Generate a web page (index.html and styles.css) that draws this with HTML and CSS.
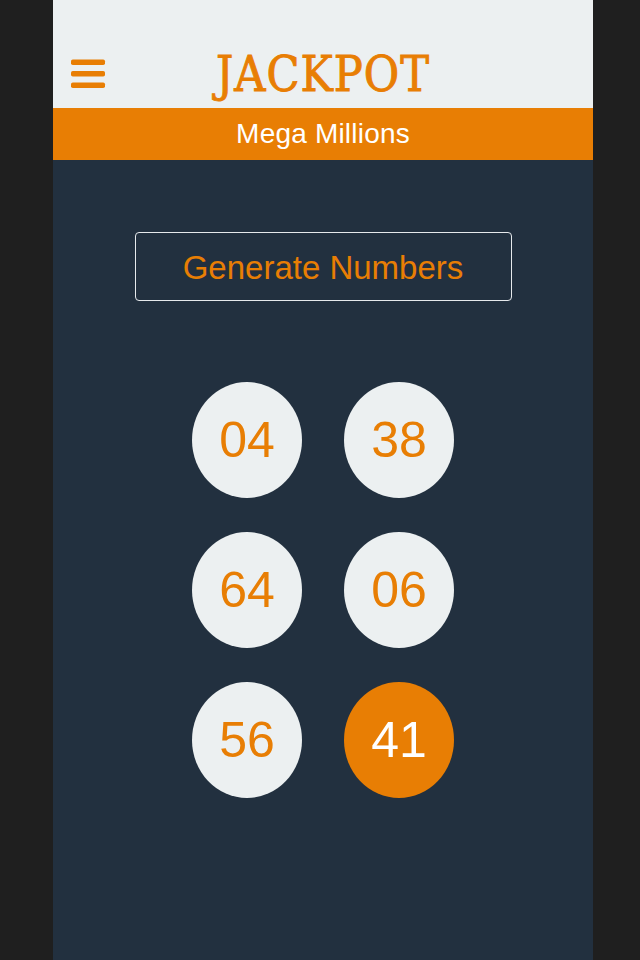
FILE: index.html
```html
<!DOCTYPE html>
<html>
<head>
<meta charset="utf-8">
<link rel="stylesheet" href="styles.css">
</head>
<body>
<div class="app">
  <header class="header">
    <button class="menu" aria-label="Menu">
      <svg width="35" height="30" viewBox="0 0 35 30">
        <rect x="0" y="0.5" width="34" height="5.5" rx="1.8" fill="#e87e04"/>
        <rect x="0" y="12" width="34" height="5.5" rx="1.8" fill="#e87e04"/>
        <rect x="0" y="23.5" width="34" height="5.5" rx="1.8" fill="#e87e04"/>
      </svg>
    </button>
    <h1 class="title">JACKPOT</h1>
  </header>
  <div class="subbar">Mega Millions</div>
  <main class="content">
    <button class="generate">Generate Numbers</button>
    <div class="balls">
      <div class="ball">04</div>
      <div class="ball">38</div>
      <div class="ball">64</div>
      <div class="ball">06</div>
      <div class="ball">56</div>
      <div class="ball mega">41</div>
    </div>
  </main>
</div>
</body>
</html>
```
FILE: styles.css
```css
html, body {
  margin: 0;
  padding: 0;
  background: #1f1f1f;
}
.app {
  width: 540px;
  height: 960px;
  margin-left: 53px;
  background: #22303f;
  display: flex;
  flex-direction: column;
  font-family: "Liberation Sans", Arial, sans-serif;
}
.header {
  height: 108px;
  background: #ecf0f1;
  position: relative;
  display: flex;
  align-items: flex-start;
  justify-content: center;
}
.menu {
  position: absolute;
  left: 18px;
  top: 59px;
  padding: 0;
  border: 0;
  background: none;
  line-height: 0;
}
.title {
  margin: 0;
  padding-top: 50px;
  font-family: "DejaVu Serif Condensed", "DejaVu Serif", serif;
  font-weight: normal;
  font-size: 48px;
  letter-spacing: 1px;
  -webkit-text-stroke: 0.9px #e87e04;
  color: #e87e04;
  line-height: 1;
}
.subbar {
  height: 52px;
  background: #e87e04;
  color: #ffffff;
  font-size: 28px;
  letter-spacing: 0.2px;
  display: flex;
  align-items: center;
  justify-content: center;
}
.content {
  flex: 1;
  display: flex;
  flex-direction: column;
  align-items: center;
  padding-top: 72px;
}
.generate {
  width: 377px;
  height: 69px;
  background: transparent;
  border: 1.5px solid #e6e9ec;
  border-radius: 4px;
  color: #e87e04;
  font-family: "Liberation Sans", Arial, sans-serif;
  font-size: 33px;
  padding: 2px 0 0;
}
.balls {
  margin-top: 81px;
  display: grid;
  grid-template-columns: 110px 110px;
  column-gap: 42px;
  row-gap: 34px;
}
.ball {
  width: 110px;
  height: 116px;
  border-radius: 50%;
  background: #ecf0f1;
  color: #e87e04;
  font-size: 50px;
  display: flex;
  align-items: center;
  justify-content: center;
}
.ball.mega {
  background: #e87e04;
  color: #ffffff;
}
```
